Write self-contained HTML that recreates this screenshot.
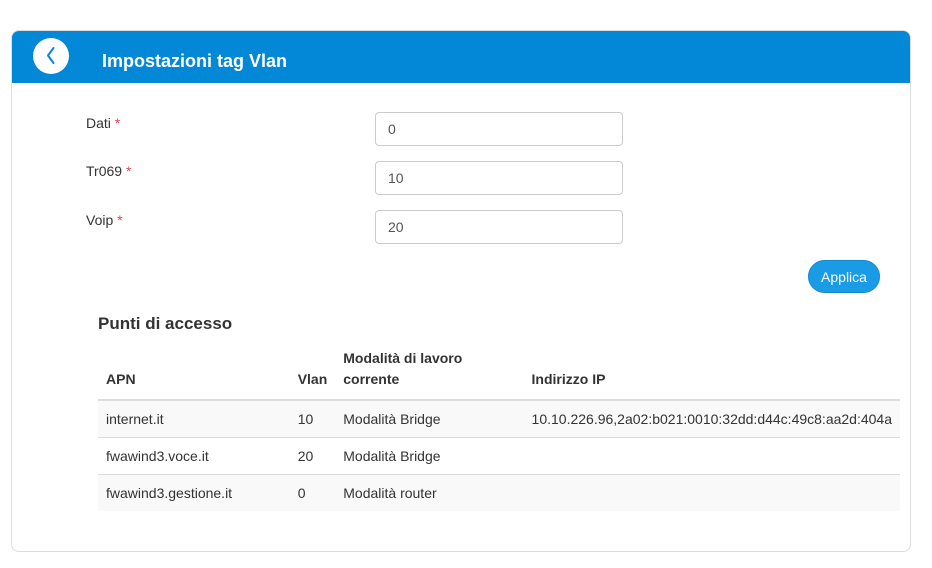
<!DOCTYPE html>
<html><head><meta charset="utf-8"><style>
*{box-sizing:border-box;margin:0;padding:0}
body{width:932px;height:568px;background:#fff;font-family:"Liberation Sans",Arial,sans-serif;color:#333;font-size:14px;position:relative;overflow:hidden}
.card{position:absolute;left:11px;top:30px;width:900px;height:522px;border:1px solid #ddd;border-radius:8px;overflow:hidden}
.hdr{position:absolute;left:0;top:0;width:100%;height:52px;background:#0288d6}
.back{position:absolute;left:21px;top:7px;width:36px;height:36px;border-radius:50%;background:#fff}
.title{position:absolute;left:90px;top:20px;color:#fff;font-weight:bold;font-size:18px}
.lbl{position:absolute;left:86px;font-size:14px}
.lbl b{color:#e0435a;font-weight:normal}
.inp{position:absolute;left:375px;width:248px;height:34px;border:1px solid #ccc;border-radius:4px;padding-left:12px;line-height:32px;font-size:14px;color:#555}
.btn{position:absolute;left:808px;top:260px;width:72px;height:33px;border-radius:17px;background:#1a9be6;color:#fff;font-size:14px;text-align:center;line-height:32px;border:1px solid #1588cc}
h3{position:absolute;left:98px;top:314px;font-size:17px;font-weight:bold;color:#333}
table{position:absolute;left:98px;top:344px;width:802px;border-collapse:collapse;font-size:14px}
th{text-align:left;font-weight:bold;vertical-align:bottom;padding:0 8px 9px;border-bottom:2px solid #ddd;height:56px;line-height:21px}
td{padding:0 8px;height:37px;border-top:1px solid #ddd}
tr.s td{background:#f9f9f9}
</style></head><body>
<div class="card">
 <div class="hdr">
  <div class="back"><svg width="36" height="36" viewBox="0 0 36 36"><path d="M20.5 10 L15 17.5 L20.5 25" fill="none" stroke="#0288d6" stroke-width="2" stroke-linecap="round" stroke-linejoin="round"/></svg></div>
  <div class="title">Impostazioni tag Vlan</div>
 </div>
</div>
<div class="lbl" style="top:115px">Dati <b>*</b></div>
<div class="inp" style="top:112px">0</div>
<div class="lbl" style="top:163px">Tr069 <b>*</b></div>
<div class="inp" style="top:161px">10</div>
<div class="lbl" style="top:212px">Voip <b>*</b></div>
<div class="inp" style="top:210px">20</div>
<div class="btn">Applica</div>
<h3>Punti di accesso</h3>
<table>
<tr><th style="width:192px">APN</th><th style="width:45px">Vlan</th><th style="width:189px">Modalità di lavoro<br>corrente</th><th>Indirizzo IP</th></tr>
<tr class="s"><td>internet.it</td><td>10</td><td>Modalità Bridge</td><td>10.10.226.96,2a02:b021:0010:32dd:d44c:49c8:aa2d:404a</td></tr>
<tr><td>fwawind3.voce.it</td><td>20</td><td>Modalità Bridge</td><td></td></tr>
<tr class="s"><td>fwawind3.gestione.it</td><td>0</td><td>Modalità router</td><td></td></tr>
</table>
</body></html>
